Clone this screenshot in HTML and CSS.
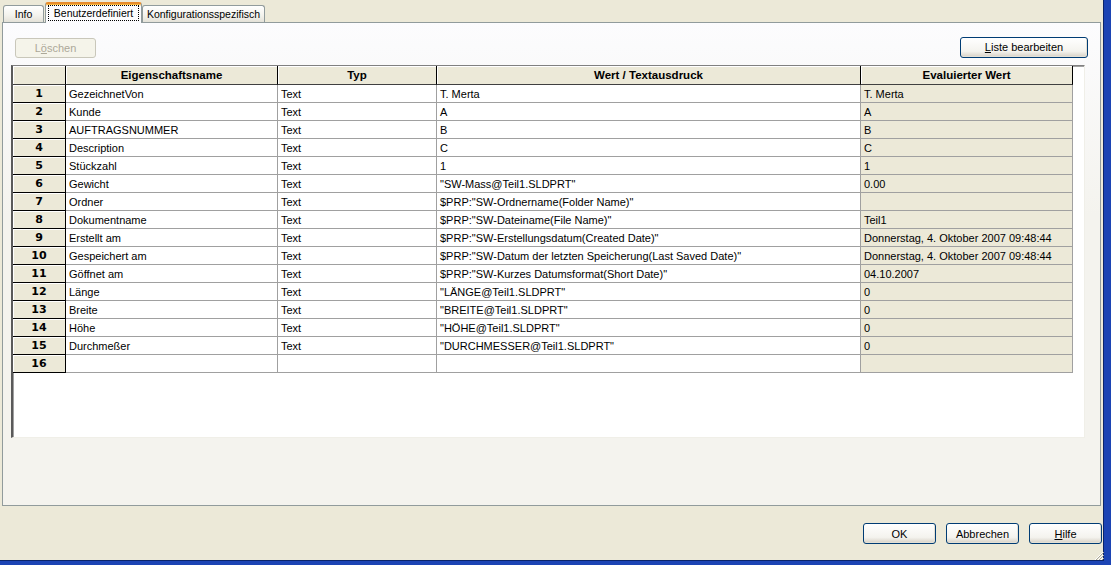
FILE: index.html
```html
<!DOCTYPE html>
<html lang="de">
<head>
<meta charset="UTF-8">
<title>Eigenschaften</title>
<link rel="stylesheet" href="styles.css">
</head>
<body>
    <div class="window">
        <!-- Tabs -->
        <div class="tabs">
            <div class="tab tab-info">Info</div>
            <div class="tab active"><span class="focus">Benutzerdefiniert</span></div>
            <div class="tab tab-config">Konfigurationsspezifisch</div>
        </div>

        <!-- Tab page -->
        <div class="panel">
            <div class="toolbar">
                <button class="btn disabled">L<u>ö</u>schen</button>
                <button class="btn wide"><u>L</u>iste bearbeiten</button>
            </div>

            <div class="grid">
                <table>
                    <colgroup>
                        <col class="c-num">
                        <col class="c-name">
                        <col class="c-type">
                        <col class="c-value">
                        <col class="c-eval">
                    </colgroup>
                    <thead>
                        <tr>
                            <th></th>
                            <th>Eigenschaftsname</th>
                            <th>Typ</th>
                            <th>Wert / Textausdruck</th>
                            <th>Evaluierter Wert</th>
                        </tr>
                    </thead>
                    <tbody>
                        <tr><th>1</th><td>GezeichnetVon</td><td>Text</td><td>T. Merta</td><td class="eval">T. Merta</td></tr>
                        <tr><th>2</th><td>Kunde</td><td>Text</td><td>A</td><td class="eval">A</td></tr>
                        <tr><th>3</th><td>AUFTRAGSNUMMER</td><td>Text</td><td>B</td><td class="eval">B</td></tr>
                        <tr><th>4</th><td>Description</td><td>Text</td><td>C</td><td class="eval">C</td></tr>
                        <tr><th>5</th><td>Stückzahl</td><td>Text</td><td>1</td><td class="eval">1</td></tr>
                        <tr><th>6</th><td>Gewicht</td><td>Text</td><td>"SW-Mass@Teil1.SLDPRT"</td><td class="eval">0.00</td></tr>
                        <tr><th>7</th><td>Ordner</td><td>Text</td><td>$PRP:"SW-Ordnername(Folder Name)"</td><td class="eval"></td></tr>
                        <tr><th>8</th><td>Dokumentname</td><td>Text</td><td>$PRP:"SW-Dateiname(File Name)"</td><td class="eval">Teil1</td></tr>
                        <tr><th>9</th><td>Erstellt am</td><td>Text</td><td>$PRP:"SW-Erstellungsdatum(Created Date)"</td><td class="eval">Donnerstag, 4. Oktober 2007 09:48:44</td></tr>
                        <tr><th>10</th><td>Gespeichert am</td><td>Text</td><td>$PRP:"SW-Datum der letzten Speicherung(Last Saved Date)"</td><td class="eval">Donnerstag, 4. Oktober 2007 09:48:44</td></tr>
                        <tr><th>11</th><td>Göffnet am</td><td>Text</td><td>$PRP:"SW-Kurzes Datumsformat(Short Date)"</td><td class="eval">04.10.2007</td></tr>
                        <tr><th>12</th><td>Länge</td><td>Text</td><td>"LÄNGE@Teil1.SLDPRT"</td><td class="eval">0</td></tr>
                        <tr><th>13</th><td>Breite</td><td>Text</td><td>"BREITE@Teil1.SLDPRT"</td><td class="eval">0</td></tr>
                        <tr><th>14</th><td>Höhe</td><td>Text</td><td>"HÖHE@Teil1.SLDPRT"</td><td class="eval">0</td></tr>
                        <tr><th>15</th><td>Durchmeßer</td><td>Text</td><td>"DURCHMESSER@Teil1.SLDPRT"</td><td class="eval">0</td></tr>
                        <tr><th>16</th><td></td><td></td><td></td><td class="eval"></td></tr>
                    </tbody>
                </table>
            </div>
        </div>

        <!-- Dialog buttons -->
        <div class="footer">
            <button class="btn">OK</button>
            <button class="btn">Abbrechen</button>
            <button class="btn"><u>H</u>ilfe</button>
            <svg class="grip" width="10" height="10" viewBox="0 0 10 10">
                <path d="M9 1 L1 9 M9 4 L4 9 M9 7 L7 9" stroke="#fff" stroke-width="1"/>
                <path d="M10 1 L2 9 M10 4 L5 9 M10 7 L8 9" stroke="#aca899" stroke-width="1"/>
            </svg>
        </div>
    </div>
</body>
</html>
```

FILE: styles.css
```css
body {
    margin: 0;
    font-family: "Liberation Sans", Arial, sans-serif;
    font-size: 11px;
    color: #000;
    background-color: #ece9d8;
    overflow: hidden;
}
.window {
    width: 1111px;
    height: 565px;
    box-sizing: border-box;
    border-right: 7px solid #1c44b4;
    border-bottom: 4px solid #1c44b4;
    box-shadow: inset -1px -1px 0 #0a246a;
    display: flex;
    flex-direction: column;
    background-color: #ece9d8;
}
.tabs {
    display: flex;
    align-items: flex-end;
    height: 20px;
    padding: 2px 0 0 3px;
    position: relative;
    z-index: 1;
}
.tab {
    box-sizing: border-box;
    height: 17px;
    line-height: 16px;
    font-size: 10.5px;
    text-align: center;
    white-space: nowrap;
    border: 1px solid #919b9c;
    border-bottom: none;
    border-radius: 3px 3px 0 0;
    background: linear-gradient(#ffffff, #f3f2ec 60%, #e4e2d8);
}
.tab-info {
    width: 41px;
    margin-right: 1px;
}
.tab-config {
    width: 123px;
}
.tab.active {
    width: 97px;
    height: 21px;
    margin-bottom: -1px;
    padding: 0 2px;
    background: #fcfcfe;
    border-top: 2px solid #ffc83c;
    box-shadow: inset 0 1px 0 #f8b840;
    border-color: #e68b2c #919b9c;
}
.focus {
    display: block;
    outline: 1px dotted #000;
    outline-offset: -1px;
    margin-top: 1px;
    line-height: 16px;
}
.panel {
    height: 484px;
    box-sizing: border-box;
    margin: 0 3px 0 2px;
    border: 1px solid #919b9c;
    background: linear-gradient(#fcfcfe, #f4f3ee 40%);
    display: flex;
    flex-direction: column;
}
.toolbar {
    display: flex;
    justify-content: space-between;
    align-items: center;
    padding: 14px 12px 0 12px;
    height: 20px;
}
.btn {
    font-family: "Liberation Sans", Arial, sans-serif;
    font-size: 11px;
    color: #000;
    width: 73px;
    height: 21px;
    padding: 0;
    border: 1px solid #003c74;
    border-radius: 3px;
    background: linear-gradient(#ffffff, #f4f3ee 70%, #d6d0c5);
    box-shadow: inset -1px -1px 0 #e3e0d5;
}
.btn.disabled {
    width: 81px;
    height: 20px;
    margin-top: 1px;
    color: #aca899;
    border-color: #c9c7ba;
    background: #f5f4ea;
    box-shadow: none;
}
.btn.wide {
    width: 128px;
}
.grid {
    margin: 8px 15px 0 8px;
    height: 373px;
    box-sizing: border-box;
    background-color: #fff;
    border-style: solid;
    border-width: 1px 1px 1px 2px;
    border-color: #808080 #f0efe8 #f0efe8 #5a5a5a;
    box-shadow: inset 1px 1px 0 #a0a0a0;
}
table {
    border-collapse: separate;
    border-spacing: 0;
    table-layout: fixed;
    width: 1060px;
}
.c-num { width: 53px; }
.c-name { width: 212px; }
.c-type { width: 159px; }
.c-value { width: 424px; }
.c-eval { width: 212px; }
tr {
    height: 18px;
}
thead tr {
    height: 19px;
}
th {
    background-color: #ece9d8;
    font-weight: bold;
    text-align: center;
    padding: 0;
    border-right: 1px solid #000;
    border-bottom: 1px solid #000;
    box-shadow: inset 1px 1px 0 #fff;
    line-height: 16px;
}
thead th {
    font-size: 11.5px;
    border-bottom-color: #404040;
}
tbody th {
    font-family: "DejaVu Sans", sans-serif;
    font-size: 11px;
}
td {
    padding: 0 0 0 3px;
    line-height: 16px;
    border-right: 1px solid #a0a0a0;
    border-bottom: 1px solid #a0a0a0;
    white-space: nowrap;
    overflow: hidden;
}
td.eval {
    background-color: #ece9d8;
}
.footer {
    flex: 1;
    display: flex;
    justify-content: flex-end;
    align-items: flex-start;
    gap: 10px;
    padding: 17px 2px 0 0;
    position: relative;
}
.grip {
    position: absolute;
    right: 0;
    bottom: 0;
}
```
